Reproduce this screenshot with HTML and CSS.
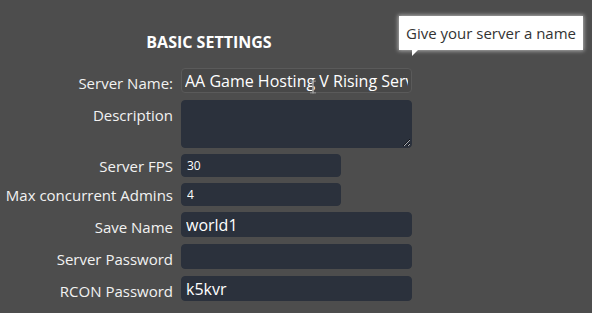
FILE: index.html
```html
<!DOCTYPE html>
<html>
<head>
<meta charset="utf-8">
<link rel="stylesheet" href="styles.css">
</head>
<body>
<div class="page">
  <h2 class="title">BASIC SETTINGS</h2>
  <div class="form">
    <label class="lbl">Server Name:</label>
    <div class="field name-field">
      <input class="inp inp-light" type="text" value="AA Game Hosting V Rising Server">
      <svg class="ibeam" width="8" height="14" viewBox="0 0 8 14"><path d="M1 0.5h2.5M4.5 0.5H7M4 1v12M1 13.5h2.5M4.5 13.5H7" stroke="#fff" stroke-width="1.4" fill="none"/><path d="M1 0.5h2.5M4.5 0.5H7M4 1v12M1 13.5h2.5M4.5 13.5H7" stroke="#000" stroke-width="0.6" fill="none"/></svg>
      <div class="tip">Give your server a name</div>
    </div>

    <label class="lbl">Description</label>
    <div class="field"><textarea class="ta"></textarea></div>

    <label class="lbl lbl-sm">Server FPS</label>
    <div class="field"><input class="inp inp-sm" type="text" value="30"></div>

    <label class="lbl lbl-sm">Max concurrent Admins</label>
    <div class="field"><input class="inp inp-sm" type="text" value="4"></div>

    <label class="lbl">Save Name</label>
    <div class="field"><input class="inp" type="text" value="world1"></div>

    <label class="lbl">Server Password</label>
    <div class="field"><input class="inp" type="text" value=""></div>

    <label class="lbl">RCON Password</label>
    <div class="field"><input class="inp" type="text" value="k5kvr"></div>
  </div>
</div>
</body>
</html>
```

FILE: styles.css
```css
html, body {
  margin: 0;
  padding: 0;
  background: #4d4d4d;
  width: 592px;
  height: 313px;
  overflow: hidden;
  font-family: "Open Sans", "Noto Sans", sans-serif;
}
.page {
  padding-top: 31px;
}
.title {
  margin: 0 0 15px 0;
  width: 418px;
  text-align: center;
  color: #ffffff;
  font-size: 16px;
  font-weight: 700;
  line-height: 22px;
}
.form {
  display: grid;
  grid-template-columns: 168px 231px;
  column-gap: 8px;
  row-gap: 6px;
  padding-left: 5px;
}
.lbl {
  text-align: right;
  color: #f2f2f2;
  font-size: 15px;
  line-height: 22px;
  padding-top: 4px;
  white-space: nowrap;
}
.lbl-sm {
  padding-top: 1px;
}
.field {
  position: relative;
  display: flex;
}
.inp {
  display: block;
  box-sizing: border-box;
  width: 231px;
  height: 25px;
  margin: 0;
  padding: 0 4px;
  border: 1px solid #2b313c;
  border-radius: 4px;
  background: #2b313c;
  color: #ffffff;
  font-family: "Open Sans", "Noto Sans", sans-serif;
  font-size: 16px;
  outline: none;
}
.inp-light {
  background: #484848;
  border-color: #5a5a5a;
  padding: 0 3px;
}
.inp-sm {
  width: 160px;
  height: 23px;
  font-size: 12px;
  padding: 0 5px;
}
.ta {
  display: block;
  box-sizing: border-box;
  width: 231px;
  height: 48px;
  margin: 0;
  border: 1px solid #2b313c;
  border-radius: 4px;
  background: #2b313c;
  color: #fff;
  resize: vertical;
  outline: none;
}
.ibeam {
  position: absolute;
  left: 128px;
  top: 12px;
}
.tip {
  position: absolute;
  left: 218px;
  top: -52px;
  box-sizing: border-box;
  width: 184px;
  height: 34px;
  padding: 0 7px;
  background: #ffffff;
  color: #333333;
  font-size: 15px;
  line-height: 34px;
  white-space: nowrap;
  box-shadow: 0 0 4px 1px rgba(255,255,255,0.55);
}
.tip::after {
  content: "";
  position: absolute;
  left: 13px;
  bottom: -6px;
  border-right: 6px solid transparent;
  border-top: 6px solid #ffffff;
}
```
